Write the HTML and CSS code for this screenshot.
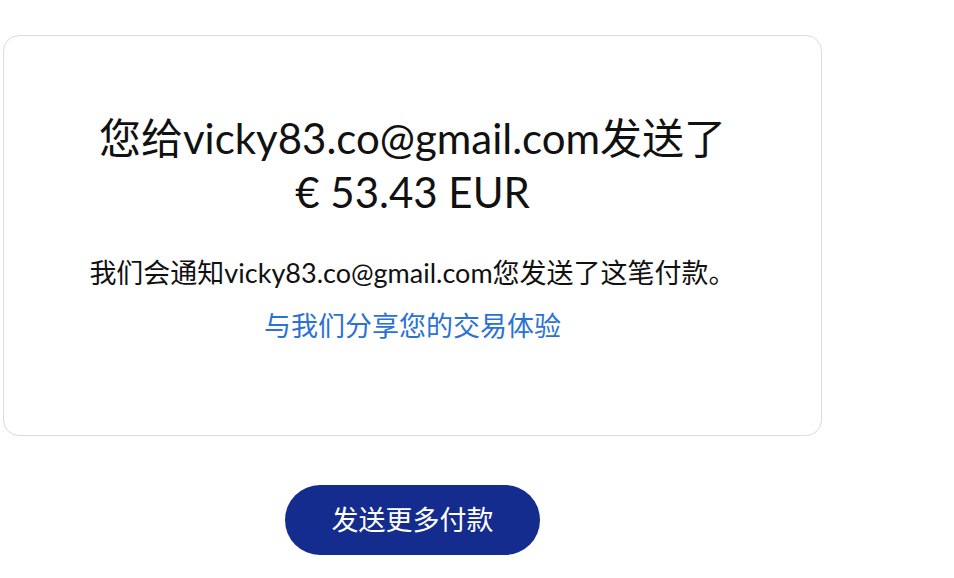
FILE: index.html
```html
<!DOCTYPE html>
<html>
<head>
    <title>付款已发送</title>
    <link rel="stylesheet" href="styles.css">
</head>
<body>
    <div class="page">
        <div class="card">
            <h1 class="title">您给vicky83.co@gmail.com发送了<span class="amount">€ 53.43 EUR</span></h1>
            <p class="notice">我们会通知vicky83.co@gmail.com您发送了这笔付款。</p>
            <a href="#" class="feedback">与我们分享您的交易体验</a>
        </div>
        <div class="actions">
            <a href="#" class="btn">发送更多付款</a>
        </div>
    </div>
</body>
</html>
```

FILE: styles.css
```css
body {
    font-family: 'Lato', 'Noto Sans CJK SC', sans-serif;
    margin: 0;
    padding: 0;
    background-color: #fff;
    color: #111;
}
.page {
    width: 819px;
    padding: 35px 0 0 3px;
}
.card {
    border: 1px solid #dcdcdc;
    border-radius: 16px;
    padding: 75px 10px 91px;
    text-align: center;
}
.title {
    font-size: 42px;
    font-weight: 400;
    line-height: 54px;
    margin: 0;
}
.amount {
    display: block;
}
.notice {
    font-size: 27px;
    line-height: 36px;
    margin: 36px 0 17px;
}
.feedback {
    display: inline-block;
    font-size: 27px;
    line-height: 36px;
    color: #2a72d4;
    text-decoration: none;
}
.actions {
    display: flex;
    justify-content: center;
    margin-top: 49px;
}
.btn {
    display: inline-block;
    width: 255px;
    height: 70px;
    line-height: 70px;
    text-align: center;
    background: #142c8e;
    color: white;
    font-size: 27px;
    text-decoration: none;
    border-radius: 35px;
}
```
